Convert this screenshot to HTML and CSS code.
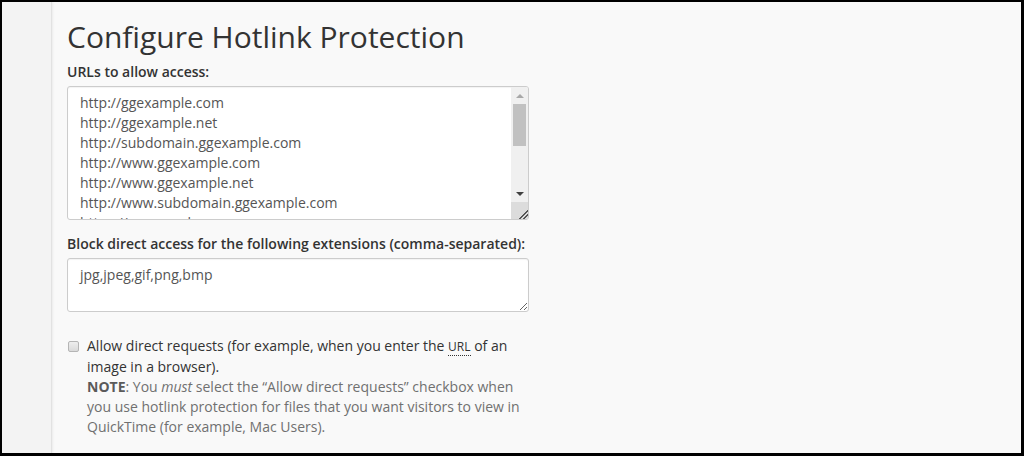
FILE: index.html
```html
<!DOCTYPE html>
<html lang="en">
<head>
<meta charset="utf-8">
<title>Configure Hotlink Protection</title>
<link rel="stylesheet" href="styles.css">
</head>
<body>
<div class="frame">
  <aside class="sidebar"></aside>
  <main class="content">
    <h1 class="title">Configure Hotlink Protection</h1>
    <div class="field">
      <label class="field-label" for="urls">URLs to allow access:</label>
      <div class="scroll-wrap">
        <textarea id="urls" class="input urls" rows="6">http://ggexample.com
http://ggexample.net
http://subdomain.ggexample.com
http://www.ggexample.com
http://www.ggexample.net
http://www.subdomain.ggexample.com
https://ggexample.com
https://ggexample.net
https://subdomain.ggexample.com
https://www.ggexample.com
https://www.ggexample.net
https://www.subdomain.ggexample.com</textarea>
        <div class="fake-scrollbar" aria-hidden="true">
          <span class="sb-arrow sb-up"></span>
          <span class="sb-track"><span class="sb-thumb"></span></span>
          <span class="sb-arrow sb-down"></span>
          <span class="sb-corner"></span>
        </div>
      </div>
    </div>
    <div class="field">
      <label class="field-label" for="ext">Block direct access for the following extensions (comma-separated):</label>
      <textarea id="ext" class="input ext">jpg,jpeg,gif,png,bmp</textarea>
    </div>
    <div class="check-row">
      <input type="checkbox" id="allow" class="check">
      <div class="check-text">
        <label for="allow">Allow direct requests (for example, when you enter the <abbr title="Uniform Resource Locator">URL</abbr> of an image in a browser).</label>
        <p class="note"><strong>NOTE</strong>: You <em>must</em> select the “Allow direct requests” checkbox when you use hotlink protection for files that you want visitors to view in QuickTime (for example, Mac Users).</p>
      </div>
    </div>
  </main>
</div>
</body>
</html>
```
FILE: styles.css
```css
* { box-sizing: border-box; }
html, body { margin: 0; padding: 0; }
body {
  font-family: "Open Sans", "Liberation Sans", sans-serif;
  font-size: 14px;
  line-height: 20px;
  color: #333;
  background: #000;
}
.frame {
  width: 1024px;
  height: 456px;
  border-style: solid;
  border-color: #000;
  border-width: 2px 3px 3px 2px;
  display: flex;
  overflow: hidden;
  background: #f9f9f9;
}
.sidebar {
  width: 50px;
  flex: none;
  background: #f3f3f3;
  border-right: 1px solid #e2e2e2;
  box-shadow: 1px 0 2px rgba(0,0,0,0.06);
}
.content {
  flex: 1;
  padding: 0 0 0 15px;
}
.title {
  font-size: 30px;
  font-weight: 400;
  line-height: 36px;
  margin: 17px 0 7px;
  color: #333;
}
.field { width: 462px; margin-bottom: 14px; }
.field-label {
  display: block;
  font-weight: 600;
  white-space: nowrap;
  margin-bottom: 4px;
}
.input {
  display: block;
  width: 462px;
  font-family: inherit;
  font-size: 14px;
  line-height: 20px;
  color: #555;
  background: #fff;
  border: 1px solid #ccc;
  border-radius: 3px;
  padding: 6px 12px;
  box-shadow: inset 0 1px 1px rgba(0,0,0,0.05);
  resize: vertical;
}
.scroll-wrap { position: relative; }
.urls { height: 134px; overflow: hidden; resize: none; padding-right: 30px; }
.ext { height: 54px; }

.fake-scrollbar {
  position: absolute;
  top: 1px;
  right: 1px;
  bottom: 1px;
  width: 17px;
  display: flex;
  flex-direction: column;
  background: #f0f0f0;
  border-radius: 0 2px 2px 0;
}
.sb-arrow {
  height: 17px;
  flex: none;
  display: flex;
  align-items: center;
  justify-content: center;
}
.sb-arrow::before {
  content: "";
  width: 0;
  height: 0;
  border-left: 4px solid transparent;
  border-right: 4px solid transparent;
}
.sb-up::before { border-bottom: 4px solid #a8a8a8; }
.sb-down::before { border-top: 4px solid #404040; }
.sb-track {
  flex: 1;
  display: block;
  padding: 0 2px;
}
.sb-thumb {
  display: block;
  height: 42px;
  background: #c1c1c1;
}
.sb-corner {
  height: 17px;
  flex: none;
  background:
    linear-gradient(135deg, transparent 0 72%, #555 72% 77%, transparent 77% 84%, #555 84% 89%, transparent 89%) ,
    #dcdcdc;
}

.check-row {
  display: flex;
  align-items: flex-start;
  width: 462px;
  margin-top: 24px;
}
.check {
  -webkit-appearance: none;
  appearance: none;
  margin: 5px 8px 0 1px;
  width: 11px;
  height: 11px;
  border: 1px solid #b5b5b5;
  border-radius: 2px;
  background: linear-gradient(#eeeeee, #dadada);
  flex: none;
}
.check-text { flex: 1; }
.check-text label { display: block; }
abbr {
  text-decoration: none;
  border-bottom: 1px dotted #333;
  font-size: 12px;
}
.note {
  margin: 0;
  color: #707070;
}
.note strong { color: #5a5a5a; }
```
